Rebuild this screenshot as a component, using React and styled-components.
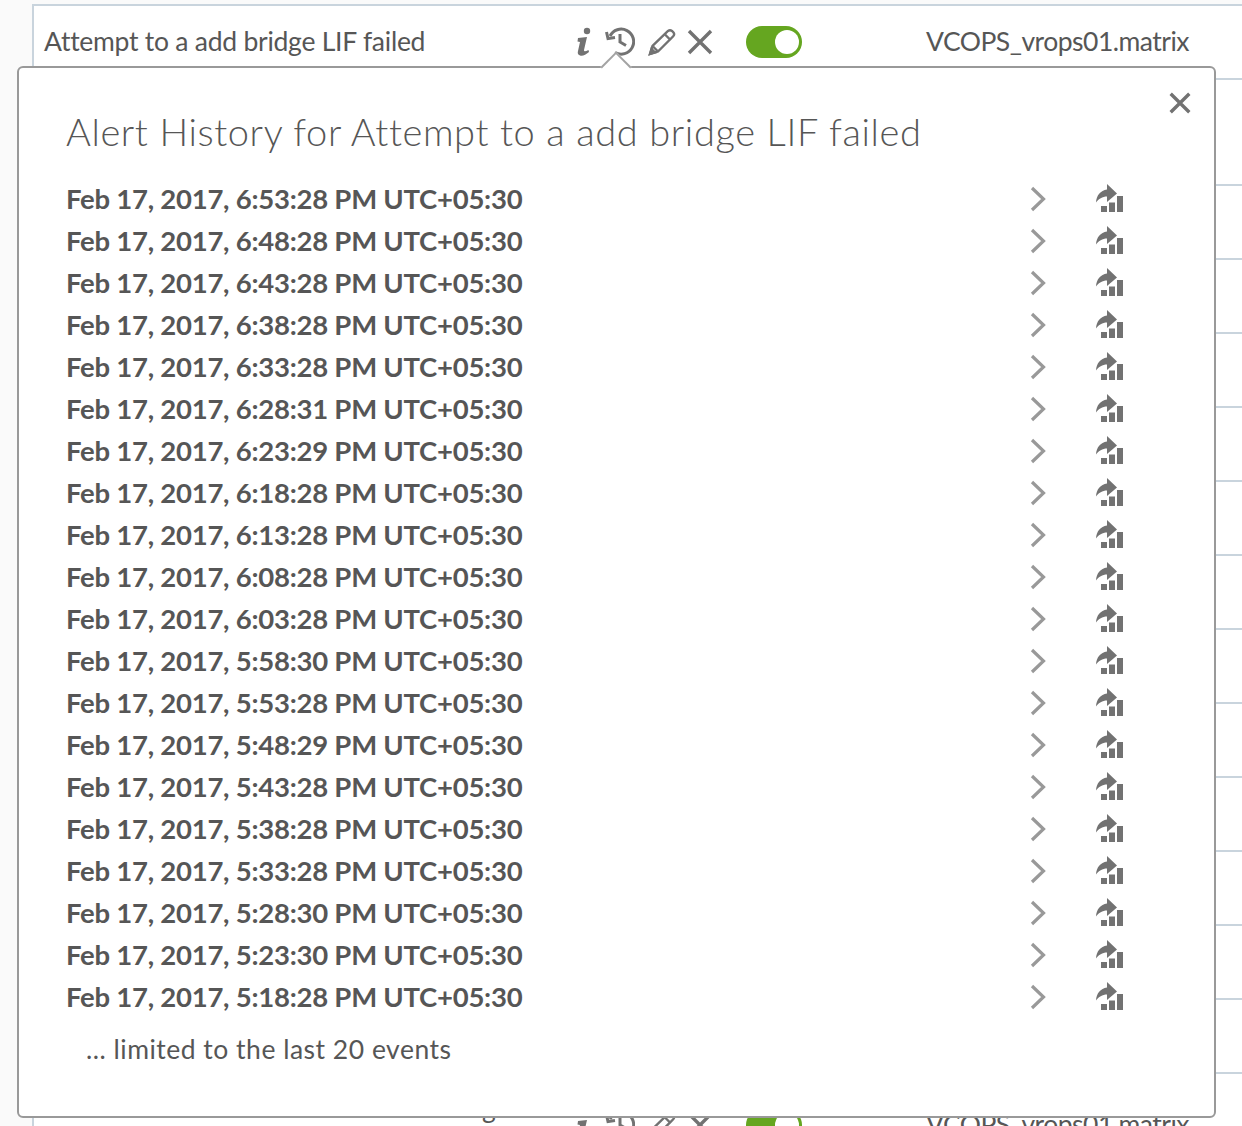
import React from "react";
import styled, { createGlobalStyle } from "styled-components";

const GlobalStyle = createGlobalStyle`
  html, body {
    margin: 0;
    padding: 0;
    background: #fff;
    font-family: "Lato", "Open Sans", sans-serif;
  }
`;

const Page = styled.div`
  position: relative;
  width: 1242px;
  height: 1126px;
  overflow: hidden;
  background: #fafafa;
  padding: 4px 0 0 32px;
  box-sizing: border-box;
`;

const Table = styled.div`
  background: #fff;
  border-left: 2px solid #c9d4dd;
  height: 100%;
`;

const Row = styled.div`
  height: ${(props) => props.$height || 74}px;
  box-sizing: border-box;
  border-top: 2px solid #c9d4dd;
  display: flex;
  align-items: center;
  padding-left: 10px;
  color: #565656;
  font-size: 26.5px;
`;

const AlertName = styled.div`
  width: 533px;
  white-space: nowrap;
  margin-bottom: ${(props) => props.$lift || 2}px;
  letter-spacing: -0.25px;
`;

const Actions = styled.div`
  display: flex;
  align-items: center;
  width: 349px;
`;

const Icon = styled.svg`
  display: block;
  flex: none;
  fill: none;
  stroke: #727272;
  stroke-width: 3;
`;

const SolidIcon = styled(Icon)`
  stroke: none;
  fill: #727272;
`;

const HistorySvg = styled(Icon)`
  margin-left: 14px;
`;

const PencilSvg = styled(Icon)`
  margin-left: 13px;
  stroke-width: 2.4;
`;

const PencilTip = styled.path`
  fill: #727272;
`;

const CrossSvg = styled(Icon)`
  margin-left: ${(props) => props.$gap || 0}px;
  stroke-width: ${(props) => props.$weight || 3.4};
`;

const ChevronSvg = styled(Icon)`
  margin-top: 2px;
  stroke: #999;
  stroke-width: 3.2;
`;

const ReportSvg = styled(SolidIcon)`
  margin-left: 50px;
`;

const Toggle = styled.div`
  width: 56px;
  height: 32px;
  margin-left: 33px;
  border-radius: 16px;
  background: #65a620;
  position: relative;
  &::after {
    content: "";
    position: absolute;
    top: 4px;
    right: 3px;
    width: 24px;
    height: 24px;
    border-radius: 50%;
    background: #fff;
  }
`;

const Source = styled.div`
  white-space: nowrap;
  margin-bottom: 2px;
  letter-spacing: -0.5px;
`;

const Popover = styled.div`
  position: absolute;
  left: 17px;
  top: 66px;
  width: 1199px;
  height: 1052px;
  box-sizing: border-box;
  background: #fff;
  border: 2px solid #999;
  border-radius: 6px;
  padding: 39px 0 0 47px;
  color: #565656;
  &::before {
    content: "";
    position: absolute;
    top: -12px;
    left: 586px;
    width: 22px;
    height: 22px;
    box-sizing: border-box;
    background: #fff;
    border-top: 2px solid #a3a3a3;
    border-left: 2px solid #a3a3a3;
    transform: rotate(45deg);
  }
`;

const CloseButton = styled.div`
  position: absolute;
  top: 24px;
  right: 23px;
  line-height: 0;
`;

const Title = styled.h2`
  margin: 0 0 22px;
  font-size: 38px;
  line-height: 48px;
  font-weight: 300;
  letter-spacing: 0.61px;
  white-space: nowrap;
`;

const EventRow = styled.div`
  display: flex;
  align-items: center;
  height: 42px;
`;

const EventTime = styled.div`
  width: 964px;
  font-size: 27.5px;
  font-weight: 700;
  letter-spacing: -0.25px;
  white-space: nowrap;
`;

const Footer = styled.div`
  margin: 14px 0 0 20px;
  font-size: 26.5px;
  line-height: 36px;
  letter-spacing: 0.5px;
`;

const InfoIcon = () => (
  <SolidIcon width="14" height="30" viewBox="0 0 14 30">
    <circle cx="10" cy="4" r="3.2" />
    <path d="M1 11 L10 10 L7 23 Q6.6 25.5 11.5 23 L12 25 Q7 29.5 3 28.5 Q0 27.5 1 24 L3 15 L0.5 14.5 Z" />
  </SolidIcon>
);

const HistoryIcon = () => (
  <HistorySvg width="30" height="30" viewBox="0 0 30 30">
    <path d="M5 9 A12.5 12.5 0 1 1 10 25.5" />
    <path d="M1.5 5 L3 11.5 L10 10.5" />
    <path d="M15 7 V15 L21 18.5" />
  </HistorySvg>
);

const PencilIcon = () => (
  <PencilSvg width="28" height="28" viewBox="0 0 28 28">
    <path d="M2 26 L4.5 18 L20 3 Q22 1.5 24 3 L25.5 4.5 Q27 6.5 25 8.5 L10 23.5 Z" />
    <path d="M17 6.5 L22.5 12 M5 18.5 L9.5 23" />
    <PencilTip d="M2 26 L3.5 21 L7 24.5 Z" />
  </PencilSvg>
);

const CrossIcon = ({ size = 26, gap, weight }) => (
  <CrossSvg width={size} height={size} viewBox="0 0 26 26" $gap={gap} $weight={weight}>
    <path d="M2 2 L24 24 M24 2 L2 24" />
  </CrossSvg>
);

const Chevron = () => (
  <ChevronSvg width="16" height="26" viewBox="0 0 16 26">
    <path d="M2 2 L13.5 13 L2 24" />
  </ChevronSvg>
);

const ReportIcon = () => (
  <ReportSvg width="28" height="28" viewBox="0 0 28 28">
    <path d="M0 18.5 C0.3 11.5 4.5 6.5 11 5.5 V0 L21 9.5 L11 18 V12.5 C6.5 12.5 2.5 15 0 18.5 Z" />
    <rect x="5" y="22" width="6" height="6" />
    <rect x="13" y="18.5" width="6" height="9.5" />
    <rect x="21" y="12" width="6" height="16" />
  </ReportSvg>
);

const alertName = "Attempt to a add bridge LIF failed";
const sourceName = "VCOPS_vrops01.matrix";

const eventTimes = [
  "6:53:28", "6:48:28", "6:43:28", "6:38:28", "6:33:28",
  "6:28:31", "6:23:29", "6:18:28", "6:13:28", "6:08:28",
  "6:03:28", "5:58:30", "5:53:28", "5:48:29", "5:43:28",
  "5:38:28", "5:33:28", "5:28:30", "5:23:30", "5:18:28",
];

const AlertRow = ({ name, height, lift }) => (
  <Row $height={height}>
    <AlertName $lift={lift}>{name}</AlertName>
    <Actions>
      <InfoIcon />
      <HistoryIcon />
      <PencilIcon />
      <CrossIcon gap={11} />
      <Toggle />
    </Actions>
    <Source>{sourceName}</Source>
  </Row>
);

const App = () => (
  <>
    <GlobalStyle />
    <Page>
      <Table>
        <AlertRow name={alertName} />
        <Row $height={106} />
        {Array.from({ length: 12 }, (_, i) => (
          <Row key={i} />
        ))}
        <AlertRow name="Datastore on this cluster is now running" height={104} lift={34} />
      </Table>
      <Popover>
        <CloseButton>
          <CrossIcon size={22} weight={4} />
        </CloseButton>
        <Title>Alert History for {alertName}</Title>
        {eventTimes.map((time) => (
          <EventRow key={time}>
            <EventTime>Feb 17, 2017, {time} PM UTC+05:30</EventTime>
            <Chevron />
            <ReportIcon />
          </EventRow>
        ))}
        <Footer>... limited to the last 20 events</Footer>
      </Popover>
    </Page>
  </>
);

export default App;
